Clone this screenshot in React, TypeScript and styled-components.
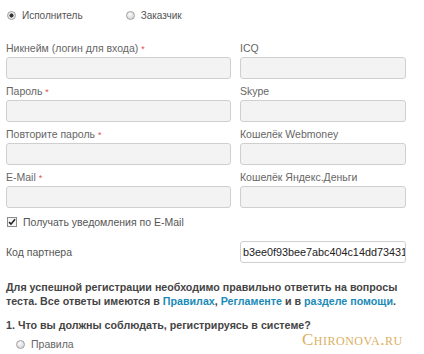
import React from "react";
import { styled, createGlobalStyle } from "styled-components";

const GlobalStyle = createGlobalStyle`
  html, body {
    margin: 0;
    padding: 0;
    background: #fff;
  }
  body {
    font-family: "Liberation Sans", Arial, sans-serif;
    font-size: 10.5px;
    color: #666;
  }
`;

const fields = [
  { left: "Никнейм (логин для входа)", right: "ICQ" },
  { left: "Пароль", right: "Skype" },
  { left: "Повторите пароль", right: "Кошелёк Webmoney" },
  { left: "E-Mail", right: "Кошелёк Яндекс.Деньги" },
];

const App = () => {
  return (
    <Page>
      <GlobalStyle />
      <RoleRow>
        <Choice>
          <Radio checked />
          Исполнитель
        </Choice>
        <Choice>
          <Radio />
          Заказчик
        </Choice>
      </RoleRow>

      <FieldGrid>
        {fields.map((f) => (
          <React.Fragment key={f.left}>
            <Field>
              <Label>
                {f.left} <Req>*</Req>
              </Label>
              <Input />
            </Field>
            <Field>
              <Label>{f.right}</Label>
              <Input />
            </Field>
          </React.Fragment>
        ))}
      </FieldGrid>

      <CheckRow>
        <Check>
          <svg width="8" height="8" viewBox="0 0 9 9">
            <path d="M1.2 4.6 L3.4 6.9 L7.9 1.4" fill="none" stroke="#222" strokeWidth="1.8" />
          </svg>
        </Check>
        Получать уведомления по E-Mail
      </CheckRow>

      <PartnerRow>
        <span>Код партнера</span>
        <Input as="div">b3ee0f93bee7abc404c14dd73431e</Input>
      </PartnerRow>

      <Notice>
        Для успешной регистрации необходимо правильно ответить на вопросы теста. Все ответы имеются в{" "}
        <Link>Правилах</Link>, <Link>Регламенте</Link> и в <Link>разделе помощи</Link>.
      </Notice>

      <Question>1. Что вы должны соблюдать, регистрируясь в системе?</Question>
      <AnswerRow>
        <Radio />
        Правила
      </AnswerRow>

      <Watermark>Chironova.ru</Watermark>
    </Page>
  );
};

export default App;

const Page = styled.div`
  position: relative;
  width: 424px;
  height: 354px;
  overflow: hidden;
  padding-left: 6px;
  box-sizing: border-box;
`;

const RoleRow = styled.div`
  display: flex;
  align-items: center;
  height: 30px;
  padding-left: 1px;
  gap: 43px;
`;

const Choice = styled.label`
  display: flex;
  align-items: center;
  gap: 6px;
  font-size: 10px;
  color: #555;
`;

const Radio = styled.span<{ checked?: boolean }>`
  display: inline-block;
  box-sizing: border-box;
  width: 9px;
  height: 9px;
  border-radius: 50%;
  border: 1px solid #a0a0a0;
  background: ${({ checked }) =>
    checked
      ? "radial-gradient(circle, #333 0 1.8px, #e6e6e6 2.3px)"
      : "radial-gradient(circle at 40% 35%, #fbfbfb, #cbcbcb)"};
`;

const FieldGrid = styled.div`
  display: grid;
  grid-template-columns: 225px 166px;
  column-gap: 9px;
  row-gap: 4px;
  margin-top: 10px;
`;

const Field = styled.div`
  display: flex;
  flex-direction: column;
`;

const Label = styled.div`
  height: 17px;
  line-height: 17px;
  color: #666;
  white-space: nowrap;
`;

const Req = styled.span`
  color: #e05050;
  font-size: 9px;
`;

const Input = styled.input`
  box-sizing: border-box;
  height: 22px;
  width: 100%;
  margin: 0;
  border: 1px solid #cfcfcf;
  border-radius: 3px;
  background: #f3f3f3;
  font: inherit;
  color: #333;
  padding: 0 2px;
  line-height: 20px;
  overflow: hidden;
  white-space: nowrap;
`;

const CheckRow = styled.div`
  display: flex;
  align-items: center;
  gap: 6px;
  height: 16px;
  margin-top: 6px;
  padding-left: 1px;
  color: #555;
`;

const Check = styled.span`
  display: inline-flex;
  align-items: center;
  justify-content: center;
  box-sizing: border-box;
  width: 10px;
  height: 10px;
  border: 1px solid #8a8a8a;
  background: #f4f4f4;
`;

const PartnerRow = styled.div`
  display: grid;
  grid-template-columns: 225px 166px;
  column-gap: 9px;
  align-items: center;
  margin-top: 11px;
  color: #555;

  & > div {
    background: #fff;
    color: #222;
    font-size: 10.8px;
  }
`;

const Notice = styled.p`
  margin: 17px 0 0;
  width: 410px;
  font-size: 10.7px;
  font-weight: bold;
  line-height: 14px;
  color: #444;
`;

const Link = styled.span`
  color: #1a8ab8;
`;

const Question = styled.div`
  margin-top: 10px;
  font-size: 10.7px;
  font-weight: bold;
  line-height: 14px;
  color: #444;
`;

const AnswerRow = styled.div`
  display: flex;
  align-items: center;
  gap: 6px;
  margin-top: 6px;
  padding-left: 10px;
  color: #666;
`;

const Watermark = styled.div`
  position: absolute;
  left: 302px;
  top: 330px;
  font-family: "Liberation Serif", "Times New Roman", serif;
  font-variant: small-caps;
  font-size: 17px;
  letter-spacing: 0.5px;
  color: #d6a346;
  opacity: 0.85;
`;
